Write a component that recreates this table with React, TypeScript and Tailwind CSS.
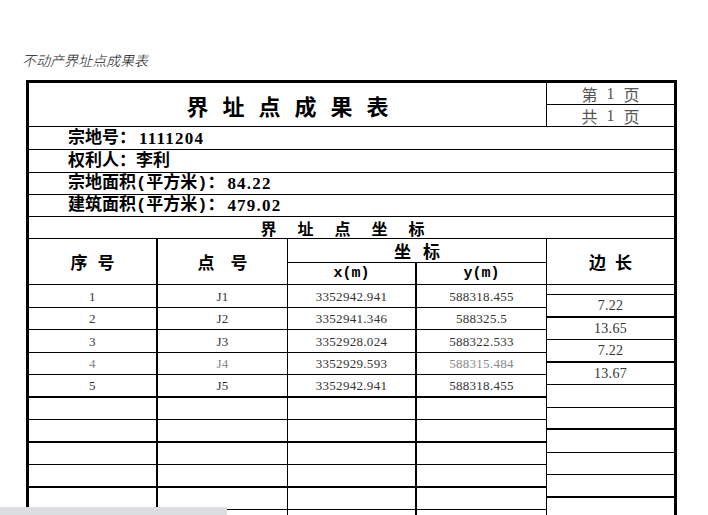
import React from "react";

const CJK = { fontFamily: '"Noto Sans CJK SC", "Noto Sans", sans-serif' };
const MONO = { fontFamily: '"Liberation Mono", "Noto Sans CJK SC", monospace' };
const SERIF = { fontFamily: '"Liberation Serif", "Noto Sans CJK SC", serif' };

function Spaced({ text, gap, className }: { text: string; gap: number; className?: string }) {
  return (
    <div className={"flex items-center " + (className || "")} style={{ gap }}>
      {text.split("").map((c, i) => (
        <span key={i}>{c}</span>
      ))}
    </div>
  );
}

const rowH = [23, 22, 23, 22, 23, 22, 23, 22, 23, 22, 23];
const rowThick = [false, false, false, false, true, false, true, false, true, false, false];
const data: [string, string, string, string, boolean][] = [
  ["1", "J1", "3352942.941", "588318.455", false],
  ["2", "J2", "3352941.346", "588325.5", false],
  ["3", "J3", "3352928.024", "588322.533", false],
  ["4", "J4", "3352929.593", "588315.484", true],
  ["5", "J5", "3352942.941", "588318.455", false],
];

const edgeH = [10, 23, 22, 23, 22, 23, 22, 23, 22, 23, 22];
const edgeThick = [false, true, false, true, false, false, true, false, false, true, false];
const edgeVal = ["", "7.22", "13.65", "7.22", "13.67"];

function InfoRow({ label, value, h }: { label: string; value: string; h: string }) {
  return (
    <div className={"flex items-center border-b border-black pl-[39px] font-bold text-black " + h}>
      <span className="text-[17px] leading-none" style={MONO}>{label}</span>
      <span className="ml-[3px] text-[17px] leading-none tracking-[1.2px]" style={SERIF}>{value}</span>
    </div>
  );
}

export default function App() {
  return (
    <div className="relative h-[515px] w-[708px] overflow-hidden bg-white">
      <div className="h-[80px] pl-[22px] pt-[48px]">
        <span className="text-[14px] font-light italic leading-[16px] text-[#111]" style={CJK}>
          不动产界址点成果表
        </span>
      </div>
      <div className="ml-[26px] w-[651px] border-x-[3px] border-t-[3px] border-black">
        {/* title row */}
        <div className="flex h-[44px] border-b border-black" style={CJK}>
          <div className="flex w-[518px] items-center justify-center border-r border-black">
            <Spaced text="界址点成果表" gap={14} className="text-[22px] font-bold leading-none text-black" />
          </div>
          <div className="flex flex-1 flex-col text-[16px] leading-none text-[#555]">
            <div className="flex h-[22px] items-center justify-center gap-[9px] border-b border-black">
              <span>第</span>
              <span style={SERIF}>1</span>
              <span>页</span>
            </div>
            <div className="flex flex-1 items-center justify-center gap-[9px]">
              <span>共</span>
              <span style={SERIF}>1</span>
              <span>页</span>
            </div>
          </div>
        </div>
        {/* info rows */}
        <InfoRow label="宗地号：" value="1111204" h="h-[23px]" />
        <InfoRow label="权利人：李利" value="" h="h-[23px]" />
        <InfoRow label="宗地面积(平方米)：" value="84.22" h="h-[22px]" />
        <InfoRow label="建筑面积(平方米)：" value="479.02" h="h-[22px]" />
        <div className="flex h-[22px] items-center justify-center border-b border-black pr-[18px]" style={CJK}>
          <Spaced text="界址点坐标" gap={21} className="text-[16px] font-bold leading-none text-black" />
        </div>
        {/* header */}
        <div className="flex h-[46px] border-b border-black text-[17px] font-bold leading-none text-black" style={CJK}>
          <div className="flex w-[129px] items-center justify-center border-r-2 border-black">
            <Spaced text="序号" gap={10} />
          </div>
          <div className="flex w-[130px] items-center justify-center border-r border-black">
            <Spaced text="点号" gap={16} />
          </div>
          <div className="flex w-[259px] flex-col border-r border-black">
            <div className="flex h-[24px] items-center justify-center border-b border-black">
              <Spaced text="坐标" gap={12} />
            </div>
            <div className="flex flex-1">
              <div className="flex w-[129px] items-center justify-center border-r-2 border-black text-[15px]" style={MONO}>
                x(m)
              </div>
              <div className="flex flex-1 items-center justify-center text-[15px]" style={MONO}>
                y(m)
              </div>
            </div>
          </div>
          <div className="flex flex-1 items-center justify-center">
            <Spaced text="边长" gap={9} />
          </div>
        </div>
        {/* body */}
        <div className="flex text-[13px] leading-none tracking-[0.3px] text-[#333]" style={SERIF}>
          <div className="flex w-[518px] flex-col">
            {rowH.map((h, i) => {
              const d = data[i];
              const tc = d && d[4] ? "text-[#888]" : "";
              return (
                <div
                  key={i}
                  className={"flex border-black " + (rowThick[i] ? "border-b-2" : "border-b")}
                  style={{ height: h }}
                >
                  <div className={"flex w-[129px] items-center justify-center border-r-2 border-black " + tc}>{d ? d[0] : ""}</div>
                  <div className={"flex w-[130px] items-center justify-center border-r border-black " + tc}>{d ? d[1] : ""}</div>
                  <div className="flex w-[129px] items-center justify-center border-r-2 border-black">{d ? d[2] : ""}</div>
                  <div className={"flex w-[130px] items-center justify-center border-r border-black " + tc}>{d ? d[3] : ""}</div>
                </div>
              );
            })}
          </div>
          <div className="flex flex-1 flex-col text-[14px]">
            {edgeH.map((h, i) => (
              <div
                key={i}
                className={"flex items-center justify-center border-black " + (edgeThick[i] ? "border-b-2" : "border-b")}
                style={{ height: h }}
              >
                {edgeVal[i] || ""}
              </div>
            ))}
          </div>
        </div>
      </div>
      <div className="absolute bottom-0 left-0 h-[8px] w-[227px] bg-[#dcdde1]" />
    </div>
  );
}
